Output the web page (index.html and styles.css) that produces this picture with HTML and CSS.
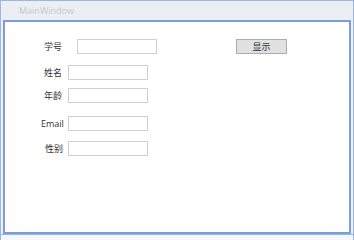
FILE: index.html
```html
<!DOCTYPE html>
<html>
<head>
<meta charset="utf-8">
<title>MainWindow</title>
<link rel="stylesheet" href="styles.css">
</head>
<body>
<div class="window">
    <div class="titlebar">MainWindow</div>
    <div class="client">
        <div class="row first">
            <span class="label">学号</span>
            <input type="text" class="field">
            <button class="show">显示</button>
        </div>
        <div class="row r2">
            <span class="label">姓名</span>
            <input type="text" class="field">
        </div>
        <div class="row r3">
            <span class="label">年龄</span>
            <input type="text" class="field">
        </div>
        <div class="row r4">
            <span class="label email">Email</span>
            <input type="text" class="field">
        </div>
        <div class="row r5">
            <span class="label sex">性别</span>
            <input type="text" class="field">
        </div>
    </div>
    <div class="grip"></div>
</div>
</body>
</html>
```

FILE: styles.css
```css
body{
    margin: 0;
    background: #f4f7fb;
    font-family: "Open Sans", "Noto Sans CJK SC", sans-serif;
    font-size: 9px;
    color: #333;
}

.window{
    width: 354px;
    height: 240px;
    box-sizing: border-box;
    border: 1px solid #9db4e6;
    border-bottom: none;
    background: #eef2f7;
    display: flex;
    flex-direction: column;
}

.titlebar{
    height: 19px;
    padding-left: 18px;
    line-height: 20px;
    color: #c0c7d1;
    font-size: 9px;
    background: #ebeff4;
}

.client{
    margin: 0 2px;
    height: 215px;
    background: #fff;
    border: 2px solid #7b9de0;
    box-sizing: border-box;
    padding-top: 17px;
}

.row{
    display: flex;
    align-items: center;
    height: 15px;
}

.label{
    margin-left: 39px;
    width: 24px;
    white-space: nowrap;
}

.label.email{
    margin-left: 36px;
    width: 27px;
}

.label.sex{
    margin-left: 40px;
    width: 23px;
}

.first .label{
    margin-right: 9px;
}

.field{
    width: 80px;
    height: 15px;
    box-sizing: border-box;
    border: 1px solid #cfcfcf;
    margin: 0;
    padding: 0;
    background: #fff;
}

.first .field{
    margin-right: 79px;
}

.r2{ margin-top: 11px; }
.r3{ margin-top: 8px; }
.r4{ margin-top: 13px; }
.r5{ margin-top: 10px; }

.show{
    width: 51px;
    height: 15px;
    padding: 0;
    border: 1px solid #adadad;
    background: #e1e1e1;
    font-family: "Noto Sans CJK SC", sans-serif;
    font-size: 9px;
    color: #333;
}

.grip{
    height: 5px;
    border-top: 1px solid #9db4e6;
    background: #f4f7fb;
}
```
